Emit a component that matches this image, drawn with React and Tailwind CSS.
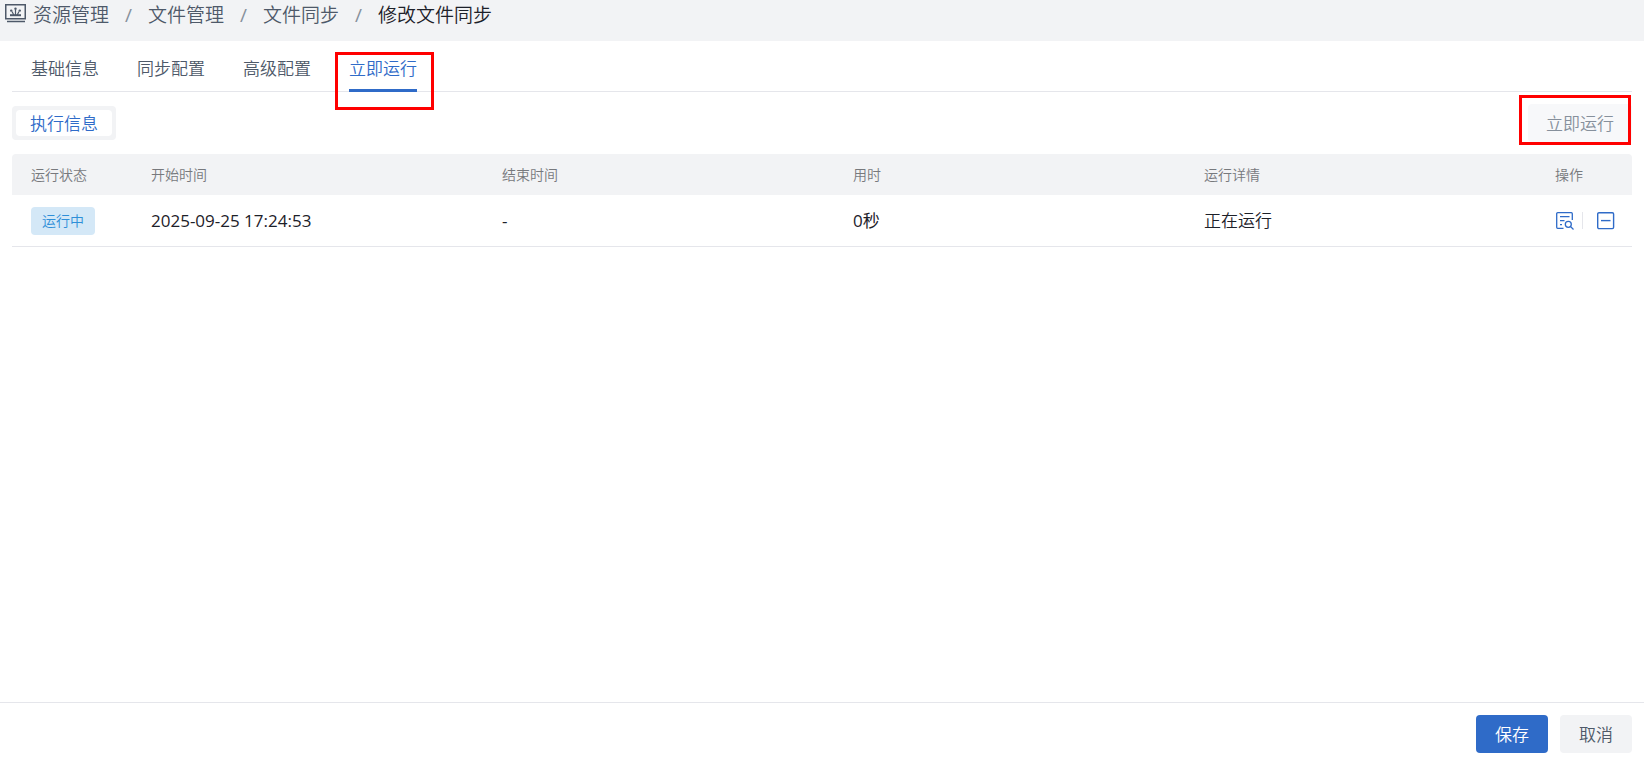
import { useState } from 'react';
import clsx from 'clsx';

const crumbs = ['资源管理', '文件管理', '文件同步', '修改文件同步'];

const tabs = ['基础信息', '同步配置', '高级配置', '立即运行'];

const columns = ['运行状态', '开始时间', '结束时间', '用时', '运行详情', '操作'];

const records = [
  { id: 1, status: '运行中', start: '2025-09-25 17:24:53', end: '-', duration: '0秒', detail: '正在运行' },
];

const ResourceIcon = () => (
  <svg width="22" height="19" viewBox="0 0 22 19" fill="none" stroke="#4e5969" aria-hidden="true">
    <rect x="0.75" y="0.75" width="19.5" height="14" strokeWidth="1.5" />
    <path d="M2 17.5h18" strokeWidth="1.5" />
    <path d="M5 11.2h11" strokeWidth="2" />
    <path d="M10.5 11V6M8.8 11 7 7.5M12.2 11 14 7.5" strokeWidth="1.2" />
    <g fill="#4e5969" stroke="none">
      <circle cx="10.5" cy="4.8" r="1.2" />
      <circle cx="6.2" cy="6.6" r="1.2" />
      <circle cx="14.8" cy="6.6" r="1.2" />
    </g>
  </svg>
);

const DetailIcon = () => (
  <svg width="18" height="18" viewBox="0 0 18 18" fill="none" stroke="#2f6bc8" strokeWidth="1.3" aria-hidden="true">
    <path d="M7.5 16.3H1.7a1 1 0 0 1-1-1V1.7a1 1 0 0 1 1-1h13.6a1 1 0 0 1 1 1V8" />
    <path d="M4 4.7h9.5M4 8.7h4.5M4 12.7h2" />
    <circle cx="12.3" cy="12.3" r="3" />
    <path d="m14.5 14.5 3 3" />
  </svg>
);

const StopIcon = () => (
  <svg width="18" height="18" viewBox="0 0 18 18" fill="none" stroke="#2f6bc8" strokeWidth="1.4" aria-hidden="true">
    <rect x="0.7" y="0.7" width="15.9" height="15.9" rx="1.3" />
    <path d="M4 8.6h9.5" />
  </svg>
);

const App = () => {
  const [activeTab, setActiveTab] = useState('立即运行');

  return (
    <div className="flex min-h-screen flex-col bg-white font-['Open_Sans','Noto_Sans_CJK_SC',sans-serif] text-[17px] leading-6 font-[350] text-[#1d2129]">
      {/* Breadcrumb */}
      <nav className="flex h-[41px] items-start bg-[#f2f3f5] pl-[5px] text-[19px] leading-[30px] text-[#4e5969]">
        <span className="mr-1.5 pt-1">
          <ResourceIcon />
        </span>
        <ol className="flex gap-4">
          {crumbs.map((crumb, index) => (
            <li key={crumb} className="flex gap-4">
              {index > 0 && <span className="font-normal text-[#86909c]">/</span>}
              {index === crumbs.length - 1 ? (
                <span className="text-[#1d2129]">{crumb}</span>
              ) : (
                <a href="#">{crumb}</a>
              )}
            </li>
          ))}
        </ol>
      </nav>

      <main className="flex-1 px-3">
        {/* Tabs */}
        <div role="tablist" className="flex gap-[38px] border-b border-[#e5e6eb] px-[19px]">
          {tabs.map((tab) => (
            <div key={tab} className="relative -mb-px">
              <button
                type="button"
                role="tab"
                aria-selected={activeTab === tab}
                onClick={() => setActiveTab(tab)}
                className={clsx(
                  'h-[51px] border-b-3 pt-2',
                  activeTab === tab ? 'border-[#2f6bc8] text-[#2f6bc8]' : 'border-transparent text-[#4e5969]'
                )}
              >
                {tab}
              </button>
              {tab === '立即运行' && (
                <div className="pointer-events-none absolute -left-[14px] top-[11px] h-[58px] w-[99px] border-3 border-[#ff0000]" />
              )}
            </div>
          ))}
        </div>

        {/* Toolbar */}
        <div className="flex items-center justify-between py-3">
          <div className="rounded bg-[#f2f3f5] p-1">
            <button type="button" className="block h-[26px] rounded bg-white px-[14px] pt-0.5 text-[#2f6bc8]">
              执行信息
            </button>
          </div>
          <div className="relative">
            <button type="button" disabled className="block h-[38px] rounded bg-[#f7f8fa] px-[18px] pt-0.5 text-[#86909c]">
              立即运行
            </button>
            <div className="pointer-events-none absolute -left-[9px] -top-[9px] h-[50px] w-28 border-3 border-[#ff0000]" />
          </div>
        </div>

        <table className="w-full table-fixed border-separate border-spacing-0 text-left">
          <colgroup>
            <col className="w-[120px]" />
            <col />
            <col />
            <col />
            <col />
            <col className="w-24" />
          </colgroup>
          <thead>
            <tr className="h-[41px] text-sm text-[#77797d]">
              {columns.map((column) => (
                <th key={column} className="bg-[#f2f3f5] pl-[19px] font-[350] first:rounded-tl last:rounded-tr">
                  {column}
                </th>
              ))}
            </tr>
          </thead>
          <tbody>
            {records.map((record) => (
              <tr key={record.id} className="h-[52px]">
                <td className="border-b border-[#e5e6eb] pl-[19px]">
                  <span className="inline-block h-7 rounded bg-[#d4e8f7] px-[11px] align-middle text-sm leading-7 text-[#2f8fd8]">
                    {record.status}
                  </span>
                </td>
                <td className="border-b border-[#e5e6eb] pl-[19px] font-normal">{record.start}</td>
                <td className="border-b border-[#e5e6eb] pl-[19px] font-normal">{record.end}</td>
                <td className="border-b border-[#e5e6eb] pl-[19px] font-normal">{record.duration}</td>
                <td className="border-b border-[#e5e6eb] pl-[19px]">{record.detail}</td>
                <td className="border-b border-[#e5e6eb] pl-5">
                  <div className="flex items-center">
                    <button type="button" aria-label="查看详情">
                      <DetailIcon />
                    </button>
                    <span className="ml-2 mr-[14px] h-[17px] w-px bg-[#e5e6eb]" />
                    <button type="button" aria-label="停止">
                      <StopIcon />
                    </button>
                  </div>
                </td>
              </tr>
            ))}
          </tbody>
        </table>
      </main>

      {/* Footer */}
      <footer className="flex justify-end gap-3 border-t border-[#e5e6eb] px-3 py-3">
        <button type="button" className="h-[38px] rounded bg-[#2f6bc8] px-[19px] pt-0.5 text-white">
          保存
        </button>
        <button type="button" className="h-[38px] rounded bg-[#f2f3f5] px-[19px] pt-0.5 text-[#4e5969]">
          取消
        </button>
      </footer>
    </div>
  );
};

export default App;
